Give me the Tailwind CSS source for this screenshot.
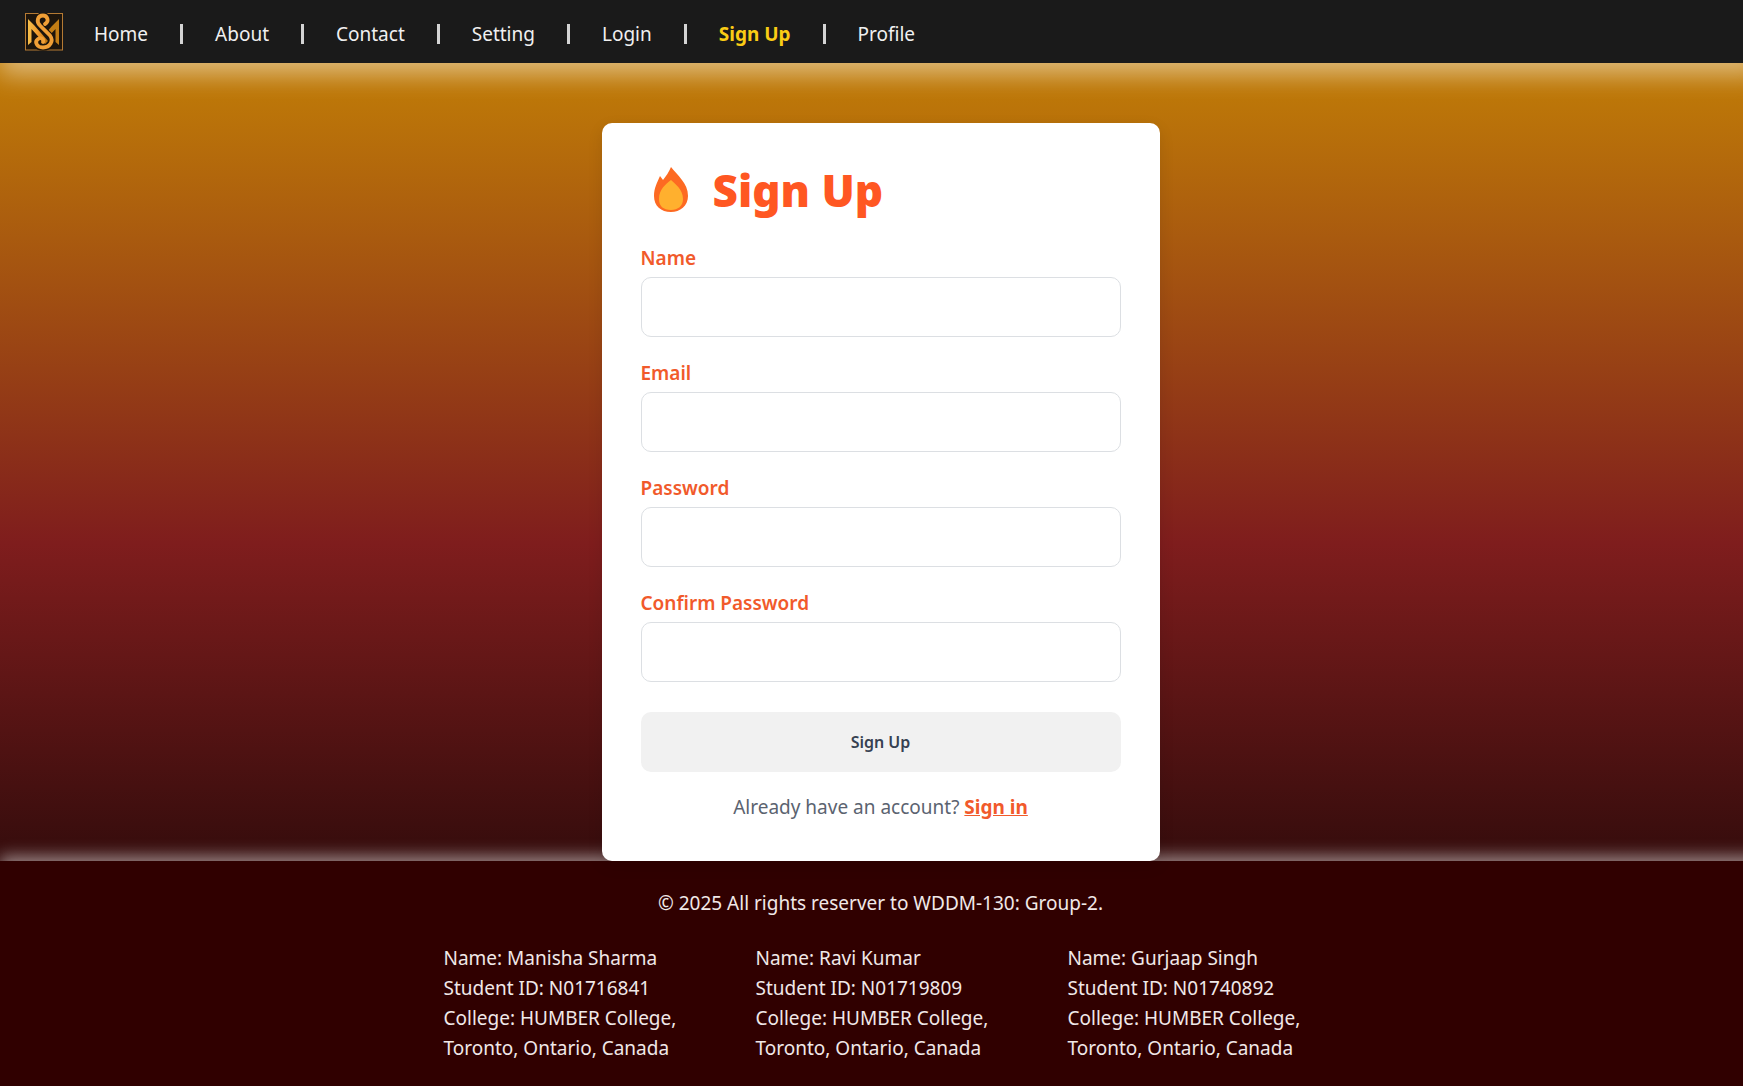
<!DOCTYPE html>
<html lang="en">
<head>
<meta charset="utf-8">
<meta name="viewport" content="width=device-width, initial-scale=1">
<title>Sign Up</title>
<script src="https://cdn.jsdelivr.net/npm/@tailwindcss/browser@4"></script>
</head>
<body class="overflow-x-hidden">
<div class="flex min-h-screen w-[calc(100%+18px)] flex-col bg-[linear-gradient(to_bottom,#ca8a04,#7f1d1d,#000000)] font-['Noto_Sans','Open_Sans',sans-serif] text-[19px] leading-[30px]">
  <header class="bg-[#1a1a1a] shadow-[0_12px_25px_rgba(255,255,255,0.45)]">
    <nav class="flex h-[63px] items-center pl-[25px] pt-1 text-[#f0f0f0]">
      <a href="#" aria-label="Logo" class="mr-[31px] -mt-1 block">
        <svg width="38" height="38" viewBox="0 0 38 38" fill="none">
          <defs>
            <linearGradient id="gold" x1="0" y1="0" x2="1" y2="0">
              <stop offset="0" stop-color="#f8c04a"/><stop offset="0.5" stop-color="#f09a2e"/><stop offset="1" stop-color="#b8700c"/>
            </linearGradient>
          </defs>
          <rect x="0.5" y="0.5" width="37" height="36.5" fill="#1d150c" stroke="#b57a33"/>
          <path d="M3 6L9 12L23 28L20 31L6.500 16V29L3 32Z" fill="url(#gold)"/>
          <path d="M34 6L27 13L21 20L24 23L30.500 16V29L34 32Z" fill="#c37d14"/>
          <path d="M22 10C25 6 22 2 18 2C13 2 11 8 15 12L25 22C30 28 25 35 18 35C12 35 8 30 12 25" stroke="#1d150c" stroke-width="5.500"/>
          <path d="M20 11C25 8 22 2.500 18 2.500C12.500 2.500 11 8.500 15 12.500L25 22.500C29 28 25 34.500 18 34.500C12 34.500 9 29 13 26C16 24 19 26 18 29" stroke="#f09f36" stroke-width="3.800" stroke-linecap="round"/>
        </svg>
      </a>
      <ul class="flex items-center gap-8">
        <li><a href="#">Home</a></li>
        <li aria-hidden="true" class="h-5 w-[3px] bg-[#d4d4d4]"></li>
        <li><a href="#">About</a></li>
        <li aria-hidden="true" class="h-5 w-[3px] bg-[#d4d4d4]"></li>
        <li><a href="#">Contact</a></li>
        <li aria-hidden="true" class="h-5 w-[3px] bg-[#d4d4d4]"></li>
        <li><a href="#">Setting</a></li>
        <li aria-hidden="true" class="h-5 w-[3px] bg-[#d4d4d4]"></li>
        <li><a href="#">Login</a></li>
        <li aria-hidden="true" class="h-5 w-[3px] bg-[#d4d4d4]"></li>
        <li><a href="#" class="font-bold text-[#facc15]">Sign Up</a></li>
        <li aria-hidden="true" class="h-5 w-[3px] bg-[#d4d4d4]"></li>
        <li><a href="#">Profile</a></li>
      </ul>
    </nav>
  </header>

  <main class="flex flex-1 items-start justify-center pt-[60px]">
    <form class="relative z-10 w-full max-w-[558px] rounded-[10px] bg-white px-[39px] pb-[39px] pt-10 shadow-[0_5px_15px_rgba(0,0,0,0.1)]">
      <h1 class="mb-[26px] flex h-[54px] items-center text-[44px] font-black text-[#ff5722]">
        <svg width="60" height="46" viewBox="0 0 60 46" class="mr-3" aria-hidden="true">
          <path d="M30 0C36 8 47 16 47 29C47 39 39 45 30 45C20 45 13 39 13 29C13 21 16 16 19 9L22 13C25 9 28 5 30 0Z" fill="#fd6a22"/>
          <path d="M30 13C34 17 42 22 42 32C42 39 37 43 30 43C22 43 18 39 18 32C18 22 25 17 30 13Z" fill="#ffb02e"/>
        </svg>
        Sign Up
      </h1>
      <div class="flex flex-col gap-[21px] text-[#f15a2b]">
        <div class="flex flex-col gap-1">
          <label for="name" class="font-semibold">Name</label>
          <input id="name" type="text" class="h-[60px] w-full rounded-[10px] border border-[#dcdfe3] px-4 text-gray-800">
        </div>
        <div class="flex flex-col gap-1">
          <label for="email" class="font-semibold">Email</label>
          <input id="email" type="email" class="h-[60px] w-full rounded-[10px] border border-[#dcdfe3] px-4 text-gray-800">
        </div>
        <div class="flex flex-col gap-1">
          <label for="password" class="font-semibold">Password</label>
          <input id="password" type="password" class="h-[60px] w-full rounded-[10px] border border-[#dcdfe3] px-4 text-gray-800">
        </div>
        <div class="flex flex-col gap-1">
          <label for="confirm" class="font-semibold">Confirm Password</label>
          <input id="confirm" type="password" class="h-[60px] w-full rounded-[10px] border border-[#dcdfe3] px-4 text-gray-800">
        </div>
      </div>
      <button type="submit" class="mt-[30px] h-[60px] w-full rounded-[10px] bg-[#f1f1f1] text-base font-semibold text-[#374151]">Sign Up</button>
      <p class="mt-5 text-center text-[#5b6370]">Already have an account? <a href="#" class="font-bold text-[#f15a2b] underline">Sign in</a></p>
    </form>
  </main>

  <footer class="bg-[#300000] px-6 pb-[23px] pt-[27px] text-[#f0e8e8] shadow-[0_-5px_15px_rgba(255,255,255,0.5)]">
    <p class="text-center">© 2025 All rights reserver to WDDM-130: Group-2.</p>
    <div class="mt-[25px] flex justify-center gap-[62px]">
      <p class="w-[250px]">Name: Manisha Sharma<br>Student ID: N01716841<br>College: HUMBER College,<br>Toronto, Ontario, Canada</p>
      <p class="w-[250px]">Name: Ravi Kumar<br>Student ID: N01719809<br>College: HUMBER College,<br>Toronto, Ontario, Canada</p>
      <p class="w-[250px]">Name: Gurjaap Singh<br>Student ID: N01740892<br>College: HUMBER College,<br>Toronto, Ontario, Canada</p>
    </div>
  </footer>
</div>
</body>
</html>
